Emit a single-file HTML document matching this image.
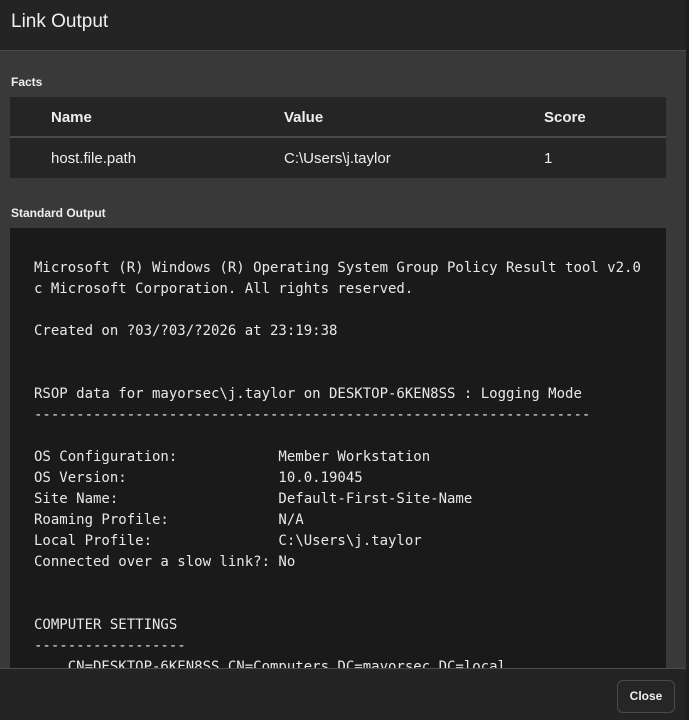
<!DOCTYPE html>
<html><head><meta charset="utf-8"><style>
*{margin:0;padding:0;box-sizing:border-box}
html,body{width:689px;height:720px;overflow:hidden;background:#393939;font-family:"Liberation Sans","DejaVu Sans",sans-serif;color:#eee}
.hdr{position:absolute;left:0;top:0;width:686px;height:51px;background:#242424;border-bottom:1px solid #4a4a4a}
.hdr h1{position:absolute;left:11px;top:11px;font-size:19px;font-weight:normal;color:#f0f0f0}
.strip{position:absolute;left:686px;top:0;width:3px;height:720px;background:#1e1e1e}
.lbl{position:absolute;left:11px;font-size:12px;font-weight:bold;color:#eee}
.tbl{position:absolute;left:10px;top:97px;width:656px;background:#252525}
.row{position:relative;height:40px;font-size:15px}
.row span{position:absolute;top:12px}
.h{font-weight:bold;border-bottom:2px solid #4a4a4a;height:41px}
.c1{left:41px}.c2{left:274px}.c3{left:534px}
.pre{position:absolute;left:10px;top:228px;width:656px;height:450px;background:#1a1a1a;overflow:hidden}
pre{position:absolute;left:24px;top:30px;font-family:"DejaVu Sans Mono","Liberation Mono",monospace;font-size:14px;line-height:21px;color:#e8e8e8}
.ftr{position:absolute;left:0;top:668px;width:686px;height:52px;background:#242424;border-top:1px solid #4a4a4a}
.btn{position:absolute;left:617px;top:11px;width:58px;height:33px;border:1px solid #4a4a4a;border-radius:6px;background:#262626;font-size:12px;font-weight:bold;color:#eee;text-align:center;line-height:31px}
</style></head><body>
<div class="hdr"><h1>Link Output</h1></div>
<div class="lbl" style="top:75px">Facts</div>
<div class="tbl">
<div class="row h"><span class="c1">Name</span><span class="c2">Value</span><span class="c3">Score</span></div>
<div class="row"><span class="c1">host.file.path</span><span class="c2">C:\Users\j.taylor</span><span class="c3">1</span></div>
</div>
<div class="lbl" style="top:206px">Standard Output</div>
<div class="pre"><pre>Microsoft (R) Windows (R) Operating System Group Policy Result tool v2.0
c Microsoft Corporation. All rights reserved.

Created on ?03/?03/?2026 at 23:19:38


RSOP data for mayorsec\j.taylor on DESKTOP-6KEN8SS : Logging Mode
------------------------------------------------------------------

OS Configuration:            Member Workstation
OS Version:                  10.0.19045
Site Name:                   Default-First-Site-Name
Roaming Profile:             N/A
Local Profile:               C:\Users\j.taylor
Connected over a slow link?: No


COMPUTER SETTINGS
------------------
    CN=DESKTOP-6KEN8SS,CN=Computers,DC=mayorsec,DC=local</pre></div>
<div class="ftr"><div class="btn">Close</div></div>
<div class="strip"></div>
</body></html>
